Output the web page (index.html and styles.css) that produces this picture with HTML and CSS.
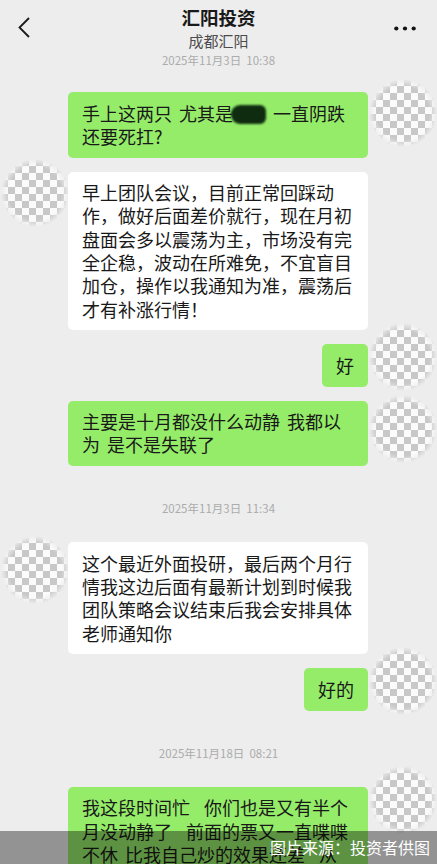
FILE: index.html
```html
<!doctype html>
<html lang="zh-CN">
<head>
  <meta charset="utf-8">
  <title>汇阳投资</title>
  <link rel="stylesheet" href="styles.css">
</head>
<body>
  <div class="screen">
    <div class="top">
      <svg class="back" viewBox="0 0 12 21"><polyline points="11,1 1.5,10.5 11,20" fill="none" stroke="#1a1a1a" stroke-width="1.8"/></svg>
      <div class="title">
        <h1>汇阳投资</h1>
        <p>成都汇阳</p>
      </div>
      <svg class="more" viewBox="0 0 22 5"><circle cx="2.3" cy="2.5" r="2.1"/><circle cx="11" cy="2.5" r="2.1"/><circle cx="19.7" cy="2.5" r="2.1"/></svg>
    </div>

    <div class="chat">
      <div class="time first">2025年11月3日&nbsp; 10:38</div>

      <div class="row me">
        <div class="msg full">手上这两只 尤其是<span class="mask"></span> 一直阴跌<br>还要死扛?</div>
        <div class="av"></div>
      </div>

      <div class="row">
        <div class="av"></div>
        <div class="msg full">早上团队会议，目前正常回踩动<br>作，做好后面差价就行，现在月初<br>盘面会多以震荡为主，市场没有完<br>全企稳，波动在所难免，不宜盲目<br>加仓，操作以我通知为准，震荡后<br>才有补涨行情！</div>
      </div>

      <div class="row me">
        <div class="msg">好</div>
        <div class="av hi"></div>
      </div>

      <div class="row me">
        <div class="msg full">主要是十月都没什么动静 我都以<br>为 是不是失联了</div>
        <div class="av lo"></div>
      </div>

      <div class="time">2025年11月3日&nbsp; 11:34</div>

      <div class="row">
        <div class="av lo"></div>
        <div class="msg full">这个最近外面投研，最后两个月行<br>情我这边后面有最新计划到时候我<br>团队策略会议结束后我会安排具体<br>老师通知你</div>
      </div>

      <div class="row me">
        <div class="msg">好的</div>
        <div class="av hi"></div>
      </div>

      <div class="time">2025年11月18日&nbsp; 08:21</div>

      <div class="row me">
        <div class="msg full">我这段时间忙&nbsp; 你们也是又有半个<br>月没动静了&nbsp; 前面的票又一直喋喋<br>不休 比我自己炒的效果还差&nbsp; 从</div>
        <div class="av hi"></div>
      </div>
    </div>

    <div class="credit">图片来源：投资者供图</div>
  </div>
</body>
</html>
```

FILE: styles.css
```css
* {
  box-sizing: border-box;
}
html, body {
  margin: 0;
  padding: 0;
  background: #ededed;
}
body {
  font-family: "Noto Sans CJK SC", "Noto Sans", sans-serif;
  color: #191919;
}
.screen {
  position: relative;
  width: 437px;
  height: 864px;
  overflow: hidden;
}

/* header */
.top {
  display: grid;
  grid-template-columns: 1fr auto 1fr;
  align-items: start;
}
.back {
  width: 12px;
  height: 21px;
  margin: 17px 0 0 18px;
}
.title {
  text-align: center;
}
.title h1 {
  margin: 0;
  padding-top: 5px;
  font-size: 18.5px;
  line-height: 24px;
  font-weight: 700;
}
.title p {
  margin: 2px 0 0;
  font-size: 15px;
  line-height: 20px;
  color: #4c4c4c;
}
.more {
  justify-self: end;
  width: 22px;
  height: 5px;
  margin: 26px 21px 0 0;
  fill: #111;
}

/* messages */
.chat {
  display: flex;
  flex-direction: column;
  gap: 14px;
  padding-top: 1px;
}
.time {
  margin: 20px 0 12px;
  text-align: center;
  font-size: 11.5px;
  line-height: 16px;
  color: #ababab;
}
.time.first {
  margin: 0 0 10px;
}
.row {
  display: flex;
  align-items: flex-start;
}
.row.me {
  justify-content: flex-end;
}
.av {
  position: relative;
  flex: none;
  width: 68px;
  align-self: stretch;
}
.row.me .av {
  width: 69px;
}
.av::before {
  content: "";
  position: absolute;
  left: 1px;
  top: -13px;
  width: 68px;
  height: 68px;
  background: repeating-conic-gradient(#c8c8c8 0 25%, #fbfbfb 0 50%) 0 0 / 14px 14px;
  -webkit-mask-image: radial-gradient(closest-side, #000 78%, transparent);
  mask-image: radial-gradient(closest-side, #000 78%, transparent);
}
.av.hi::before {
  top: -21px;
}
.av.lo::before {
  top: -6px;
}
.msg {
  position: relative;
  z-index: 1;
  padding: 9.5px 14px;
  background: #fff;
  border-radius: 5px;
  font-size: 18px;
  line-height: 23.3px;
  word-spacing: 3px;
  white-space: nowrap;
}
.me .msg {
  background: #95ec69;
}
.msg.full {
  width: 300px;
}
.mask {
  display: inline-block;
  width: 35px;
  height: 19px;
  margin: 0 0 0 -2px;
  vertical-align: -3px;
  background: #0f2c10;
  border-radius: 9px 6px 6px 9px;
  filter: blur(0.8px);
}

/* caption strip */
.credit {
  position: absolute;
  left: 0;
  right: 0;
  bottom: 0;
  z-index: 2;
  height: 33px;
  padding-right: 7px;
  background: rgba(0, 0, 0, 0.38);
  color: #fff;
  font-size: 16px;
  line-height: 33px;
  text-align: right;
}
```
